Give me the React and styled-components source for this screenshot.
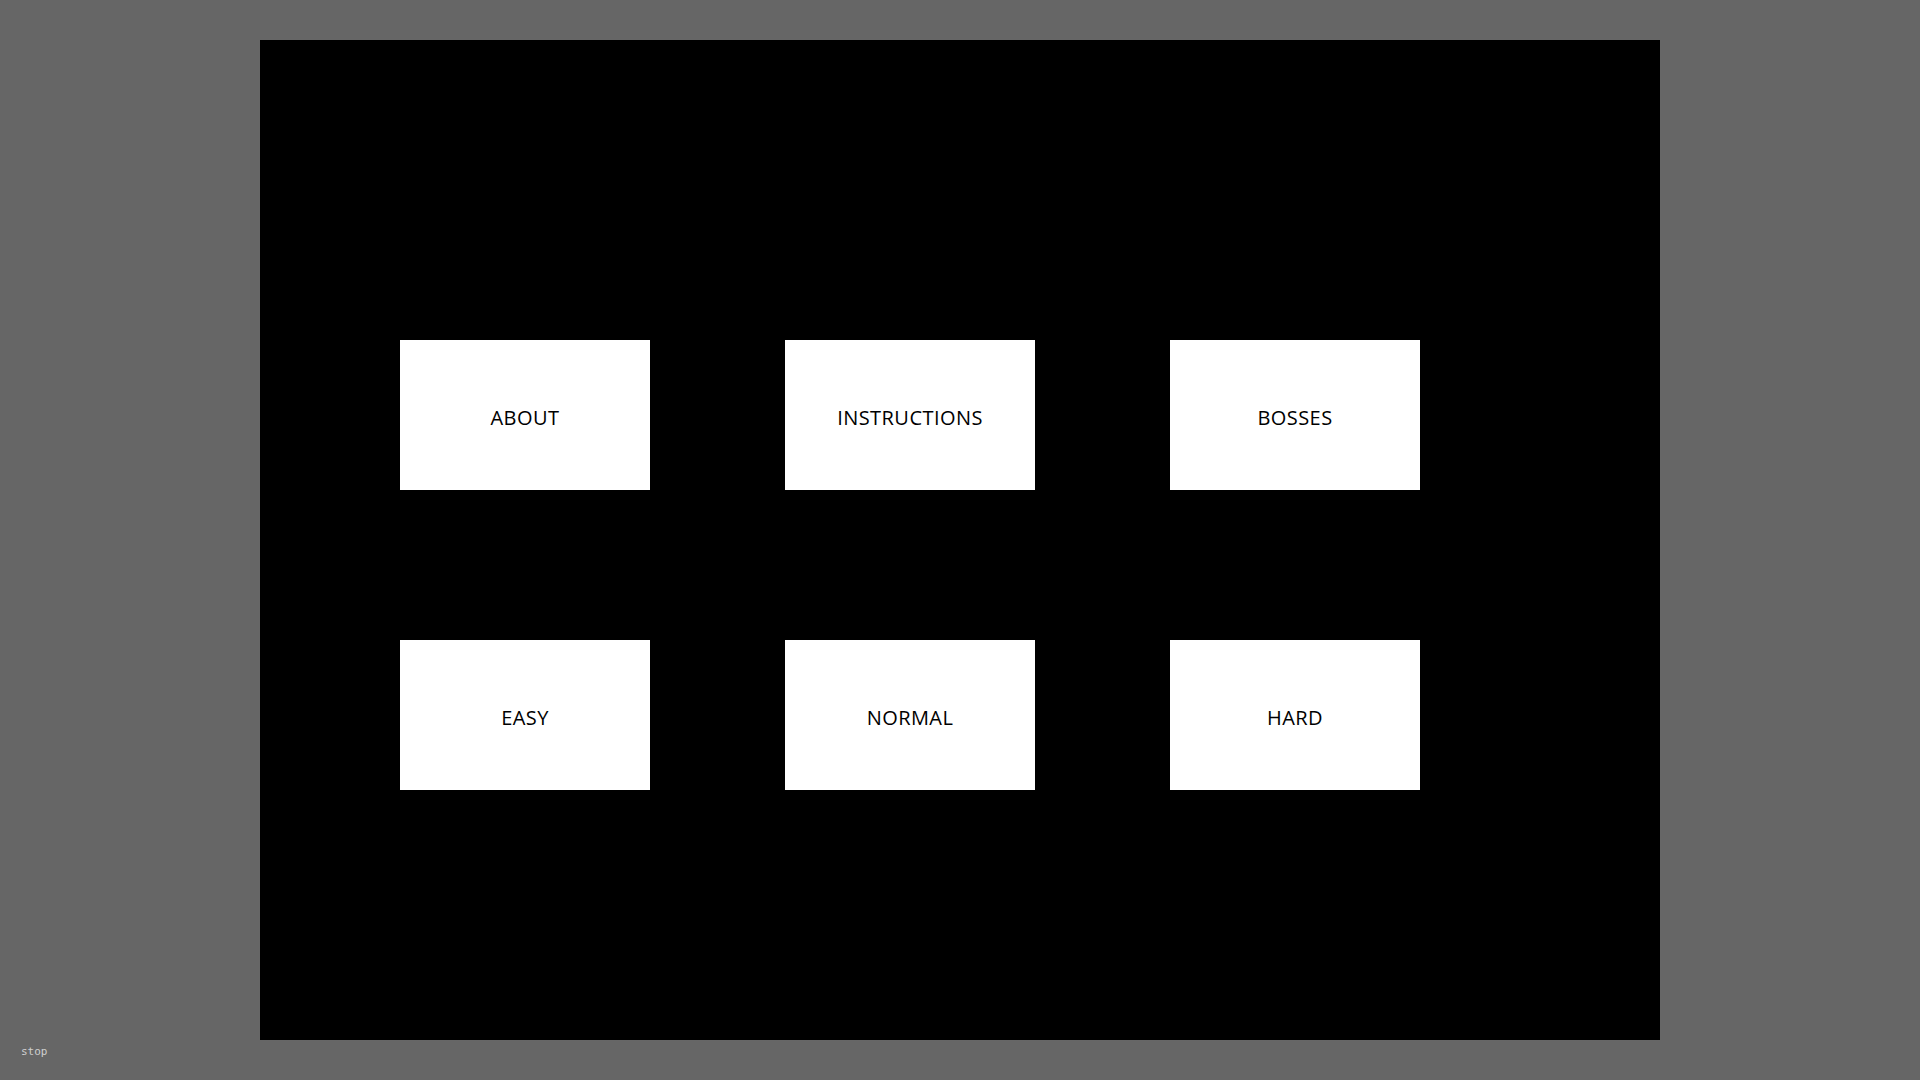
import React from "react";
import styled, { createGlobalStyle } from "styled-components";

const Global = createGlobalStyle`
  html, body { margin: 0; padding: 0; background: #666666; }
  body { width: 1920px; height: 1080px; overflow: hidden; }
`;

const Stage = styled.div`
  position: relative;
  width: 1920px;
  height: 1080px;
  display: flex;
  align-items: center;
  justify-content: center;
`;

const Canvas = styled.div`
  width: 1400px;
  height: 1000px;
  box-sizing: border-box;
  background: #000000;
  padding: 300px 0 0 140px;
  display: grid;
  grid-template-columns: repeat(3, 250px);
  grid-auto-rows: 150px;
  column-gap: 135px;
  row-gap: 150px;
  align-content: start;
`;

const MenuButton = styled.div`
  background: #ffffff;
  color: #000000;
  display: flex;
  align-items: center;
  justify-content: center;
  padding-top: 4px;
  box-sizing: border-box;
  font-family: "Open Sans", "Noto Sans", sans-serif;
  font-size: 20px;
  letter-spacing: 0.45px;
`;

const StatusLabel = styled.div`
  position: absolute;
  left: 21px;
  top: 1045px;
  font-family: "DejaVu Sans Mono", monospace;
  font-size: 11px;
  color: #cfcfcf;
`;

const items = ["ABOUT", "INSTRUCTIONS", "BOSSES", "EASY", "NORMAL", "HARD"];

export default function App() {
  return (
    <>
      <Global />
      <Stage>
        <Canvas>
          {items.map((t) => (
            <MenuButton key={t}>{t}</MenuButton>
          ))}
        </Canvas>
        <StatusLabel>stop</StatusLabel>
      </Stage>
    </>
  );
}
